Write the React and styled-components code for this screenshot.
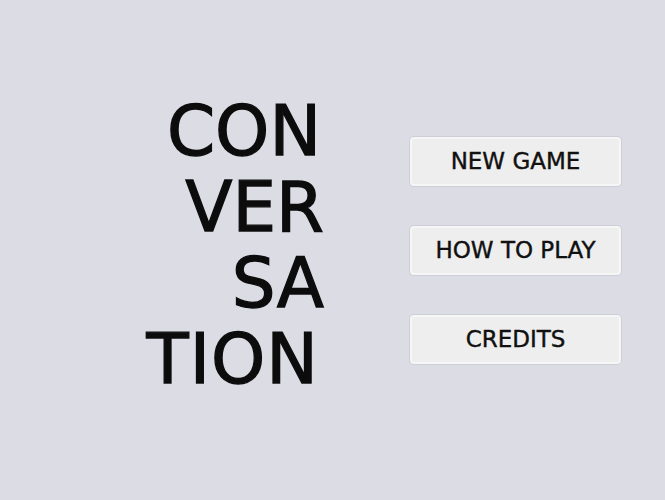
import React from "react"
import styled, { createGlobalStyle } from "styled-components"

const GlobalStyle = createGlobalStyle`
  html, body {
    margin: 0;
    padding: 0;
    background: #dcdce5;
  }
  * {
    box-sizing: border-box;
  }
`

const Screen = styled.main`
  width: 665px;
  height: 500px;
  display: flex;
  align-items: center;
  padding-left: 124px;
  background: #dcdce5;
  font-family: "DejaVu Sans", "Liberation Sans", sans-serif;
  color: #111;
`

const Title = styled.h1`
  width: 200px;
  margin: 0 0 10px 0;
  font-size: 69px;
  font-weight: 400;
  line-height: 76px;
  text-align: right;
  color: #0c0c0c;
  -webkit-text-stroke: 1.3px #0c0c0c;
`

const TitleLine = styled.span`
  display: block;
  letter-spacing: ${p => (p.wide ? "1px" : "0")};
  margin-right: ${p => p.inset || 0}px;
`

const Menu = styled.nav`
  display: flex;
  flex-direction: column;
  gap: 40px;
  width: 211px;
  margin-left: 86px;
`

const MenuButton = styled.button`
  height: 49px;
  width: 100%;
  background: #eeeeee;
  border: 2px solid #f6f6f6;
  border-radius: 4px;
  box-shadow: 0 0 0 1px rgba(180, 180, 195, 0.35);
  font-family: "DejaVu Sans", "Liberation Sans", sans-serif;
  font-size: 23px;
  font-weight: 400;
  color: #111;
  -webkit-text-stroke: 0.4px #111;
  cursor: pointer;
  padding: 0;
`

const lines = [
  { text: "CON", inset: 3 },
  { text: "VER", inset: 0 },
  { text: "SA", inset: 0 },
  { text: "TION", inset: 5, wide: true },
]
const items = ["NEW GAME", "HOW TO PLAY", "CREDITS"]

export default function App() {
  return (
    <>
      <GlobalStyle />
      <Screen>
        <Title>
          {lines.map(line => (
            <TitleLine key={line.text} inset={line.inset} wide={line.wide}>
              {line.text}
            </TitleLine>
          ))}
        </Title>
        <Menu>
          {items.map(item => (
            <MenuButton key={item}>{item}</MenuButton>
          ))}
        </Menu>
      </Screen>
    </>
  )
}
